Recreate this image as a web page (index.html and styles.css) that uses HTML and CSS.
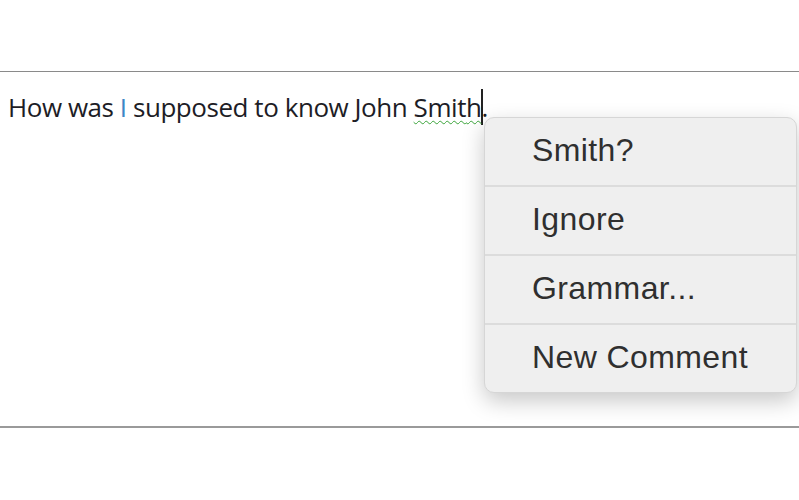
FILE: index.html
```html
<!DOCTYPE html>
<html lang="en">
<head>
  <meta charset="UTF-8" />
  <meta name="viewport" content="width=device-width, initial-scale=1.0" />
  <title>Spelling Suggestions</title>
  <link rel="stylesheet" href="styles.css">
</head>
<body>
  <div class="editor">
    <p class="line">How was <span class="blue">I</span> supposed to know John <span class="misspelled">Smit</span><span class="cursor-wrap">h</span>.</p>

    <!-- Spelling context menu -->
    <ul class="context-menu">
      <li>Smith?</li>
      <li>Ignore</li>
      <li>Grammar...</li>
      <li>New Comment</li>
    </ul>
  </div>
</body>
</html>
```

FILE: styles.css
```css
body {
  margin: 0;
  background: #fff;
  font-family: "Open Sans", sans-serif;
}
.editor {
  position: relative;
  margin-top: 71px;
  height: 354px;
  border-top: 1px solid #8a8a8a;
  border-bottom: 2px solid #9a9a9a;
}
.line {
  margin: 0;
  padding: 20px 0 0 8px;
  font-size: 26px;
  line-height: 30px;
  color: #1d1d26;
  letter-spacing: -0.45px;
}
.blue {
  color: #3d86c6;
}
.misspelled {
  text-decoration: underline wavy #3aa33a;
  text-decoration-thickness: 1px;
  text-underline-offset: 3px;
}
.cursor-wrap {
  text-decoration: underline wavy #3aa33a;
  text-decoration-thickness: 1px;
  text-underline-offset: 3px;
  border-right: 2px solid #222;
  margin-right: -2px;
}
/* Context menu */
.context-menu {
  position: absolute;
  left: 484px;
  top: 45px;
  width: 311px;
  margin: 0;
  padding: 0;
  list-style: none;
  background: #efefef;
  border: 1px solid #d6d6d6;
  border-radius: 10px;
  box-shadow: 0 8px 22px rgba(0,0,0,0.22);
  font-family: "Liberation Sans", Arial, sans-serif;
}
.context-menu li {
  height: 67px;
  line-height: 64px;
  padding-left: 47px;
  font-size: 32px;
  letter-spacing: 0.4px;
  color: #2f2f2f;
  border-top: 2px solid #dcdcdc;
}
.context-menu li:first-child {
  border-top: none;
}
```
